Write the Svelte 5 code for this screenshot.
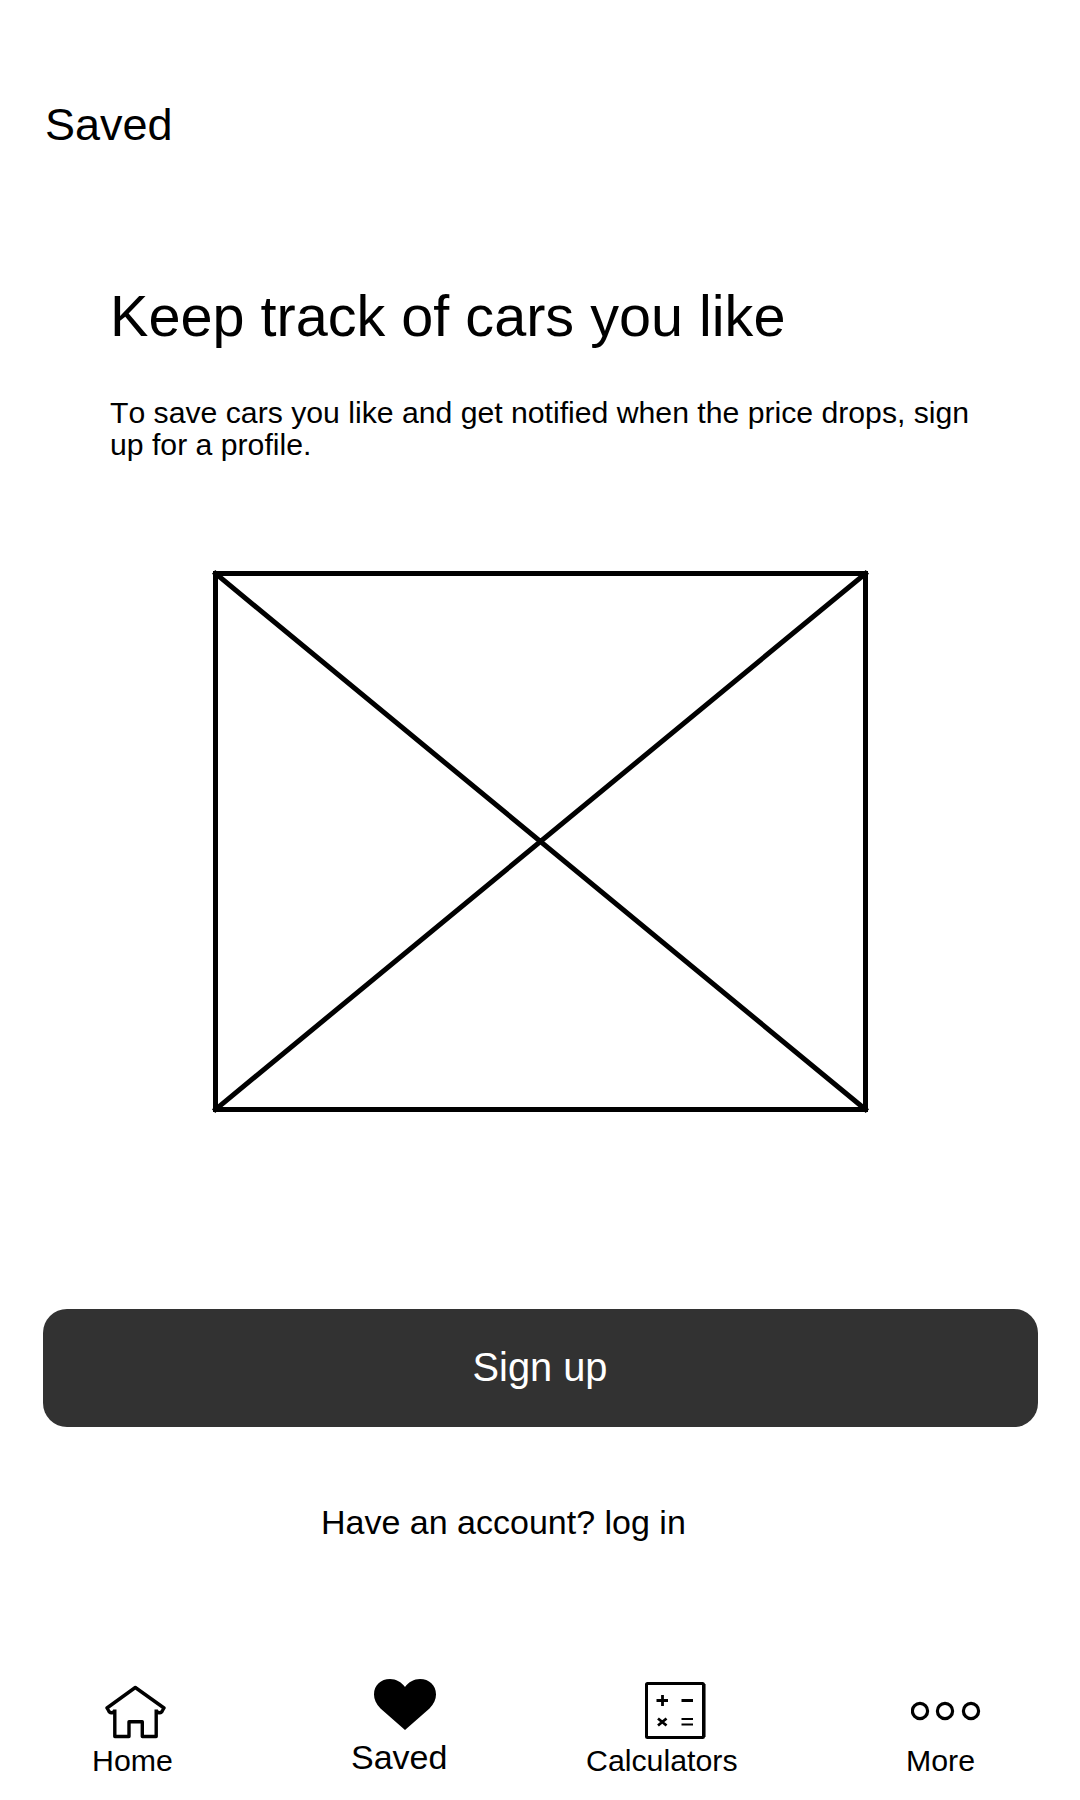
<script>
  const tabs = [
    { id: 'home', label: 'Home' },
    { id: 'saved', label: 'Saved' },
    { id: 'calculators', label: 'Calculators' },
    { id: 'more', label: 'More' }
  ];
</script>

<div class="screen">
  <header>Saved</header>

  <main>
    <section class="intro">
      <h1>Keep track of cars you like</h1>
      <p>To save cars you like and get notified when the price drops, sign up for a profile.</p>
    </section>

    <svg class="placeholder" viewBox="0 0 655 541" fill="none" stroke="#000">
      <rect x="2.5" y="2.5" width="650" height="536" stroke-width="5" />
      <path d="M2.500 2.500 652.500 538.500M652.500 2.500 2.500 538.500" stroke-width="5" stroke-linecap="square" />
    </svg>

    <button class="signup">Sign up</button>
    <a class="login" href="#login">Have an account? log in</a>
  </main>

  <nav>
    {#each tabs as tab (tab.id)}
      <div class="tab {tab.id}">
        {#if tab.id === 'home'}
          <svg width="62" height="63" fill="none" stroke="#000" stroke-width="3.4" stroke-linejoin="round">
            <path d="M9.800 30.500V57.500H24V42.700H37.300V57.500H51.200V30.500" />
            <path d="M9.500 32 8 33.500Q4.500 34.500 3.500 31.500L2 29 30.300 8.500 59 29 57.500 31.500Q56.500 34.500 53 33.500L51.500 32" />
          </svg>
        {:else if tab.id === 'saved'}
          <svg width="62" height="57">
            <path d="M31 51 6.500 29.500C2 25 0 20 0 15.500 0 6 7 0 16 0c6 0 11.500 3 15 8C34.500 3 40 0 46 0c9 0 16 6 16 15.500 0 4.500-2 9.500-6.500 14Z" />
          </svg>
        {:else if tab.id === 'calculators'}
          <svg width="61" height="63" fill="none" stroke="#000">
            <rect x="1.500" y="4.500" width="57" height="54" rx="1" stroke-width="3" />
            <path d="M58.800 5v53" stroke-width="3.500" />
            <path d="M11.500 21.500h11.500M17.500 16v11M36.500 21.500h11.500" stroke-width="2.800" />
            <path d="M13 39.500l8.500 7M21.500 39.500l-8.500 7" stroke-width="2.800" />
            <path d="M36.500 40h11.500M36.500 45.500h11.500" stroke-width="2" />
          </svg>
        {:else}
          <svg width="70" height="63" fill="none" stroke="#000" stroke-width="3.2">
            <circle cx="9" cy="32" r="7.600" />
            <circle cx="34" cy="32" r="7.600" />
            <circle cx="60" cy="32" r="7.600" />
          </svg>
        {/if}
        <span>{tab.label}</span>
      </div>
    {/each}
  </nav>
</div>

<style>
  :global(body) {
    background: #fff;
  }
  .screen {
    box-sizing: border-box;
    width: 1080px;
    height: 1800px;
    padding-top: 99px;
    overflow: hidden;
    background: #fff;
    color: #000;
    font-family: "Liberation Sans", Arial, sans-serif;
  }
  header {
    padding-left: 45px;
    font-size: 45px;
    line-height: 52px;
  }
  main {
    display: flex;
    flex-direction: column;
    align-items: flex-start;
    padding: 132px 42px 0 43px;
  }
  .intro {
    padding-left: 67px;
  }
  h1 {
    margin: 0 0 48px;
    font-size: 57.6px;
    font-weight: 400;
    line-height: 66px;
  }
  p {
    width: 880px;
    margin: 0;
    font-size: 30.2px;
    font-kerning: none;
    line-height: 32px;
  }
  .placeholder {
    width: 655px;
    height: 541px;
    margin: 110px 0 197px 170px;
    overflow: visible;
  }
  .signup {
    width: 995px;
    height: 118px;
    padding: 0 1px 2px 0;
    border: 0;
    border-radius: 24px;
    background: #323232;
    color: #fff;
    font: 39.8px "Liberation Sans", Arial, sans-serif;
  }
  .login {
    margin: 75px 0 0 278px;
    color: #000;
    font-size: 34px;
    line-height: 40px;
    text-decoration: none;
  }
  nav {
    display: grid;
    grid-template-columns: 259px 235px 320px auto;
    padding: 137px 0 0 92px;
  }
  .tab {
    display: flex;
    flex-direction: column;
    align-items: flex-start;
    font-size: 30.3px;
    line-height: 38px;
  }
  .tab svg {
    display: block;
  }
  .home svg {
    margin-left: 13px;
  }
  .saved {
    font-size: 34px;
    line-height: 42px;
  }
  .saved svg {
    margin-left: 23px;
  }
  .calculators svg {
    margin-left: 59px;
  }
  .more svg {
    margin-left: 5px;
  }
</style>
